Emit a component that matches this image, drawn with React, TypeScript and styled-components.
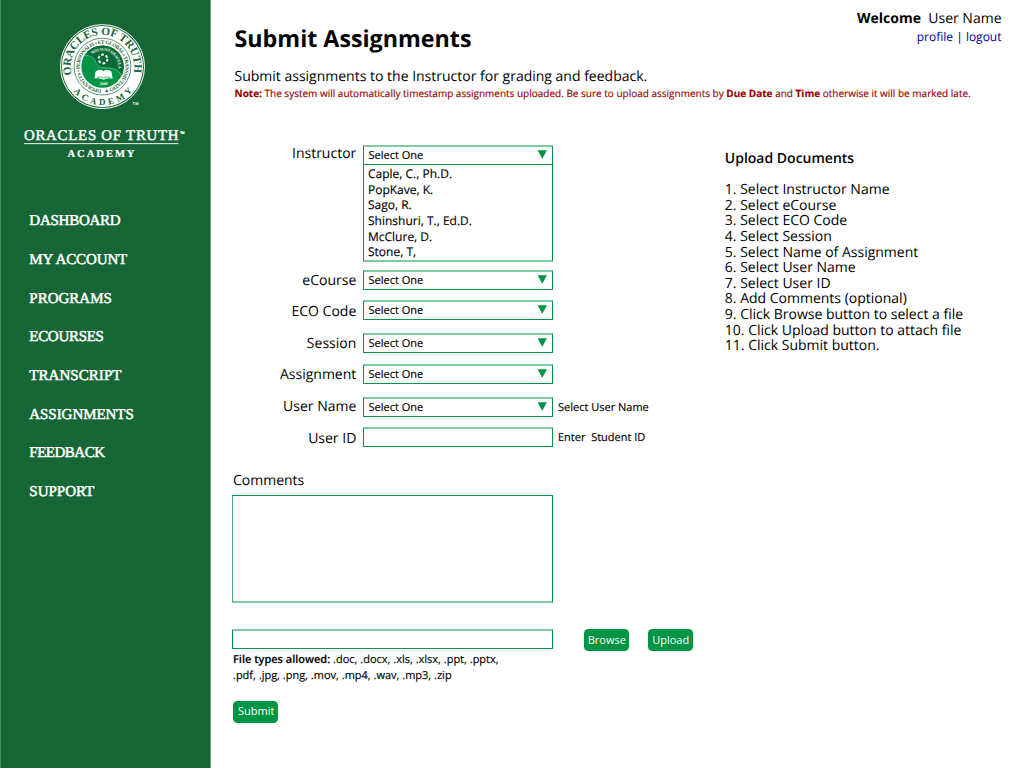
import React from "react";
import styled, { createGlobalStyle } from "styled-components";

const green = "#009444";
const softGreen = "#80c9a1";

const GlobalStyle = createGlobalStyle`
  *, *::before, *::after { box-sizing: border-box; }
  body {
    margin: 0;
    background: #fff;
    color: #000;
    font-family: "Open Sans", sans-serif;
    font-size: 14px;
    line-height: 20px;
    text-rendering: geometricPrecision;
  }
`;

const Page = styled.div`
  display: grid;
  grid-template-columns: 211px 1fr;
  width: 1024px;
  height: 768px;
  overflow: hidden;
`;

const Sidebar = styled.aside`
  background: #166636;
  border-left: 1px solid #458560;
  border-right: 1px solid #73a386;
`;

const Brand = styled.svg`
  display: block;
  margin-left: -1px;
`;

const Nav = styled.nav`
  display: flex;
  flex-direction: column;
  padding: 37.2px 0 0 28.3px;
`;

const NavLink = styled.a<{ $track: number }>`
  height: 38.7px;
  line-height: 20px;
  font-family: "Liberation Serif", serif;
  font-size: 15px;
  letter-spacing: ${(p) => p.$track}px;
  color: #fff;
  -webkit-text-stroke: 0.5px #fff;
  white-space: nowrap;
`;

const Main = styled.main`
  padding: 0 22px;
`;

const Header = styled.header`
  display: flex;
  justify-content: space-between;
  height: 145px;
  padding: 0 0.5px 0 1.5px;
`;

const Intro = styled.div`
  padding-top: 23px;
  width: 620px;
  white-space: nowrap;
`;

const Title = styled.h1`
  margin: 0 0 14px;
  font-size: 23.25px;
  line-height: 30px;
  font-weight: 700;
`;

const Lead = styled.p`
  margin: 0 0 -2px;
  font-size: 14px;
  line-height: 20px;
`;

const Note = styled.p`
  margin: 0;
  font-size: 10px;
  line-height: 16px;
  color: #990000;
  -webkit-text-stroke: 0.15px #990000;
`;

const Account = styled.div`
  padding-top: 9px;
  text-align: right;
  white-space: pre;
`;

const AccountLinks = styled.div`
  margin-top: -1px;
  font-size: 12px;
  line-height: 17px;
  a { color: #000099; }
`;

const Body = styled.div`
  display: grid;
  grid-template-columns: 491.8px 1fr;
`;

const Row = styled.div<{ $gap?: number }>`
  display: grid;
  grid-template-columns: 123.3px 190px 1fr;
  column-gap: 6.7px;
  align-items: start;
  margin-top: ${(p) => p.$gap ?? 0}px;
`;

const Label = styled.label<{ $shift?: number }>`
  margin-top: ${(p) => p.$shift ?? 0}px;
  margin-bottom: -6px;
  text-align: right;
  white-space: nowrap;
`;

const Select = styled.button`
  display: flex;
  justify-content: space-between;
  align-items: center;
  width: 190px;
  height: 20px;
  padding: 0 5px 2px 4.5px;
  border: 1px solid ${green};
  border-top: 2px solid ${softGreen};
  background: #fff;
  color: #000;
  font: 11px/15px "Open Sans", sans-serif;
  -webkit-text-stroke: 0.15px #000;
`;

const Arrow = styled.span`
  width: 9.4px;
  height: 8.4px;
  background: ${green};
  clip-path: polygon(0 0, 100% 0, 50% 100%);
`;

const Options = styled.ul`
  margin: 0;
  padding: 1px 0 0 4px;
  height: 97px;
  list-style: none;
  border: 1px solid ${green};
  border-top: 0;
  border-bottom: 2px solid ${softGreen};
  font-size: 12px;
  line-height: 15.65px;
  -webkit-text-stroke: 0.15px #000;
`;

const Hint = styled.span`
  margin: 1px 0 -1px -1.7px;
  font-size: 11px;
  white-space: pre;
  -webkit-text-stroke: 0.15px #000;
`;

const TextInput = styled.input<{ $width: number }>`
  display: block;
  width: ${(p) => p.$width}px;
  height: 20px;
  padding: 0 4px;
  border: 1px solid ${green};
  border-top: 2px solid ${softGreen};
  outline: 0;
  background: #fff;
  font: 11px "Open Sans", sans-serif;
`;

const Comments = styled.section`
  margin-top: 24px;
`;

const CommentsBox = styled.textarea`
  display: block;
  width: 321px;
  height: 108px;
  margin: 4px 0 0 -1px;
  border: 1px solid ${green};
  border-left-color: #40ae73;
  border-bottom: 2px solid ${softGreen};
  outline: 0;
  resize: none;
`;

const FileRow = styled.div`
  display: flex;
  align-items: flex-start;
  margin: 26px -20px 0 -1px;
`;

const Button = styled.button<{ $left?: number; $inset?: number }>`
  flex: none;
  width: 45px;
  height: 22px;
  margin: 0 0 0 ${(p) => p.$left ?? 0}px;
  padding: 0 0 1px ${(p) => p.$inset ?? 0}px;
  border: 0;
  border-radius: 4.5px;
  background: ${green};
  color: #fff;
  font: 11px/20px "Open Sans", sans-serif;
  text-align: center;
`;

const FileTypes = styled.p`
  margin: 1px 0 16.5px;
  font-size: 11px;
  line-height: 16px;
  -webkit-text-stroke: 0.15px #000;
  b { font-weight: 600; }
`;

const Steps = styled.section`
  white-space: nowrap;
  h2 {
    margin: 4px 0 13.2px;
    font-size: 14px;
    line-height: 20px;
    font-weight: 600;
  }
  ol {
    margin: 0;
    padding: 0;
    list-style: none;
    line-height: 15.6px;
  }
`;

const navItems: [string, number][] = [
  ["DASHBOARD", -0.25],
  ["MY ACCOUNT", -0.12],
  ["PROGRAMS", 0],
  ["ECOURSES", -0.3],
  ["TRANSCRIPT", 0.05],
  ["ASSIGNMENTS", -0.05],
  ["FEEDBACK", -0.5],
  ["SUPPORT", 0],
];

const instructors = ["Caple, C., Ph.D.", "PopKave, K.", "Sago, R.", "Shinshuri, T., Ed.D.", "McClure, D.", "Stone, T,"];

const fields = [
  { label: "eCourse", gap: 8, shift: 1, hint: "" },
  { label: "ECO Code", gap: 10, shift: 1.5, hint: "" },
  { label: "Session", gap: 13, shift: 1, hint: "" },
  { label: "Assignment", gap: 11, shift: 1, hint: "" },
  { label: "User Name", gap: 13, shift: 0, hint: "Select User Name" },
];

const steps = [
  "Select Instructor Name",
  "Select eCourse",
  "Select ECO Code",
  "Select Session",
  "Select Name of Assignment",
  "Select User Name",
  "Select User ID",
  "Add Comments (optional)",
  "Click Browse button to select a file",
  "Click Upload button to attach file",
  "Click Submit button.",
];

function Logo() {
  return (
    <Brand width="210" height="174" viewBox="0 0 210 174" fontFamily="Liberation Serif, serif">
      <defs>
        <path id="outerArc" d="M 71.9 74.9 A 31.7 31.7 0 1 1 133.1 74.9" />
        <path id="lowerArc" d="M 67.9 83.4 A 38.4 38.4 0 0 0 137.1 83.4" />
        <path id="innerArc" d="M 101.5 89.4 A 22.8 22.8 0 1 1 103.5 89.4" />
        <path id="mottoArc" d="M 92.2 54.4 A 15.9 15.9 0 0 1 118.2 69" />
      </defs>
      <circle cx="102.5" cy="66.6" r="42" fill="none" stroke="#fff" strokeWidth="1" />
      <circle cx="102.5" cy="66.6" r="40.6" fill="#fff" />
      <circle cx="102.5" cy="66.6" r="28.4" fill="none" stroke="#166636" strokeWidth="0.7" />
      <circle cx="102.5" cy="66.6" r="21.2" fill={green} />
      <path
        d="M 85.5 54 A 21.2 21.2 0 0 1 122 75 C 118 67 112 68 105 67.5 C 97 67 97 64 95.8 60.5 C 94 57 90 56 85.5 54 Z"
        fill="#0b6b38"
      />
      <path d="M 84.5 55.3 C 91 55.6 94 57.5 95.5 61.5 C 97 67 101 67.7 106 68 C 114 68 118 69.5 121.8 76" fill="none" stroke="#7fc49b" strokeWidth="0.6" />
      <g fill="#166636" fontWeight="700">
        <text fontSize="11.3">
          <textPath href="#outerArc" textLength="114">ORACLES OF TRUTH</textPath>
        </text>
        <text fontSize="9">
          <textPath href="#lowerArc" startOffset="10" textLength="67">ACADEMY</textPath>
        </text>
        <text fontSize="5.2">
          <textPath href="#innerArc" textLength="140">OPERANTES • PERSONALIS • ET GLOBAL • TRANSMUTATIO ✦</textPath>
        </text>
      </g>
      <text fontSize="4" fontWeight="700" fill="#fff">
        <textPath href="#mottoArc" textLength="38">NOS SUNT ORACULA</textPath>
      </text>
      <circle cx="103" cy="59" r="4.4" fill="none" stroke="#fff" strokeWidth="2" strokeDasharray="2.6 2" />
      <path d="M 94.5 78.6 L 95.5 71.8 Q 99.5 68.2 103.5 71.2 Q 107.5 68.2 111.5 71.8 L 112.7 78.6 Q 107.5 77.3 103.5 79.8 Q 99.5 77.3 94.5 78.6 Z" fill="#fff" />
      <path d="M 97 77.4 Q 100.5 76 103.5 78 Q 106.5 76 110 77.4" fill="none" stroke={green} strokeWidth="0.7" />
      <text x="99.6" y="84.8" fontSize="4" fontWeight="700" fill="#fff" textLength="8">2009</text>
      <g fill="#fff">
        <text x="132.5" y="105.3" fontSize="4" fontWeight="700" fontFamily="Liberation Sans, sans-serif" textLength="6">TM</text>
        <text x="24" y="140.4" fontSize="14.8" textLength="154.5" stroke="#fff" strokeWidth="0.45">ORACLES OF TRUTH</text>
        <text x="180" y="133.6" fontSize="3.6" fontWeight="700" fontFamily="Liberation Sans, sans-serif" textLength="4.6" stroke="#fff" strokeWidth="0.2">TM</text>
        <rect x="24" y="143.2" width="154.5" height="0.9" />
        <text x="67.5" y="156.7" fontSize="10.6" fontWeight="700" textLength="67" stroke="#fff" strokeWidth="0.2">ACADEMY</text>
      </g>
    </Brand>
  );
}

function SelectBox() {
  return (
    <Select type="button">
      Select One
      <Arrow />
    </Select>
  );
}

export default function App() {
  return (
    <Page>
      <GlobalStyle />
      <Sidebar>
        <Logo />
        <Nav>
          {navItems.map(([name, track]) => (
            <NavLink key={name} $track={track}>{name}</NavLink>
          ))}
        </Nav>
      </Sidebar>
      <Main>
        <Header>
          <Intro>
            <Title>Submit Assignments</Title>
            <Lead>Submit assignments to the Instructor for grading and feedback.</Lead>
            <Note>
              <b>Note:</b> The system will automatically timestamp assignments uploaded. Be sure to upload assignments by{" "}
              <b>Due Date</b> and <b>Time</b> otherwise it will be marked late.
            </Note>
          </Intro>
          <Account>
            <div><b>Welcome</b>{"  User Name"}</div>
            <AccountLinks><a>profile</a> | <a>logout</a></AccountLinks>
          </Account>
        </Header>
        <Body>
          <form>
            <Row>
              <Label $shift={-1}>Instructor</Label>
              <div>
                <SelectBox />
                <Options>
                  {instructors.map((name) => <li key={name}>{name}</li>)}
                </Options>
              </div>
            </Row>
            {fields.map((f) => (
              <Row key={f.label} $gap={f.gap}>
                <Label $shift={f.shift}>{f.label}</Label>
                <SelectBox />
                <Hint>{f.hint}</Hint>
              </Row>
            ))}
            <Row $gap={10}>
              <Label $shift={2}>User ID</Label>
              <TextInput $width={190} />
              <Hint>{"Enter  Student ID"}</Hint>
            </Row>
            <Comments>
              <div>Comments</div>
              <CommentsBox />
            </Comments>
            <FileRow>
              <TextInput $width={321} />
              <Button type="button" $left={31.3}>Browse</Button>
              <Button type="button" $left={18.9}>Upload</Button>
            </FileRow>
            <FileTypes>
              <b>File types allowed:</b> .doc, .docx, .xls, .xlsx, .ppt, .pptx,
              <br />
              .pdf, .jpg, .png, .mov, .mp4, .wav, .mp3, .zip
            </FileTypes>
            <Button type="button" $inset={1.5}>Submit</Button>
          </form>
          <Steps>
            <h2>Upload Documents</h2>
            <ol>
              {steps.map((s, i) => <li key={s}>{i + 1}. {s}</li>)}
            </ol>
          </Steps>
        </Body>
      </Main>
    </Page>
  );
}
